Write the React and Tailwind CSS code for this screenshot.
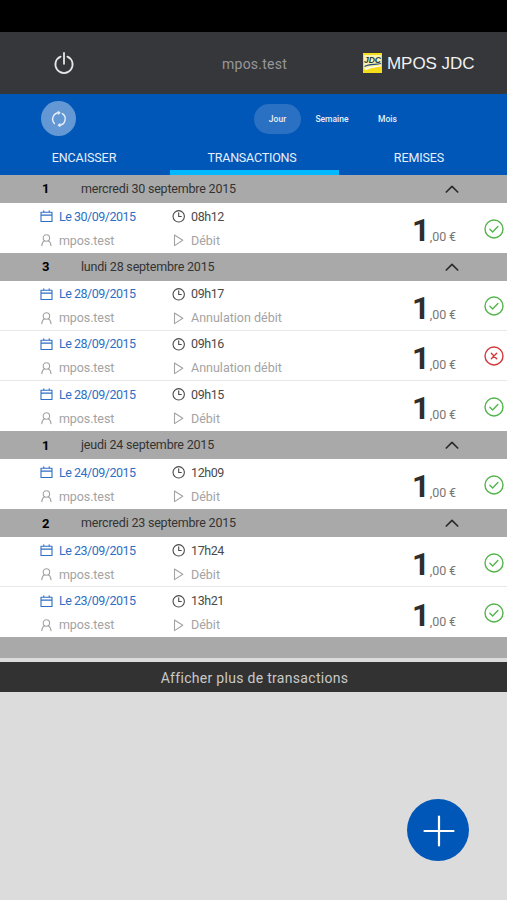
import { Fragment } from "react";

const groups = [
    {
        count: 1,
        label: "mercredi 30 septembre 2015",
        rows: [{ date: "Le 30/09/2015", time: "08h12", type: "Débit", ok: true }],
    },
    {
        count: 3,
        label: "lundi 28 septembre 2015",
        rows: [
            { date: "Le 28/09/2015", time: "09h17", type: "Annulation débit", ok: true },
            { date: "Le 28/09/2015", time: "09h16", type: "Annulation débit", ok: false },
            { date: "Le 28/09/2015", time: "09h15", type: "Débit", ok: true },
        ],
    },
    {
        count: 1,
        label: "jeudi 24 septembre 2015",
        rows: [{ date: "Le 24/09/2015", time: "12h09", type: "Débit", ok: true }],
    },
    {
        count: 2,
        label: "mercredi 23 septembre 2015",
        rows: [
            { date: "Le 23/09/2015", time: "17h24", type: "Débit", ok: true },
            { date: "Le 23/09/2015", time: "13h21", type: "Débit", ok: true },
        ],
    },
];

function Icon({ size = 13, width = 1, className = "", children }) {
    return (
        <svg
            width={size}
            height={size}
            viewBox={`0 0 ${size} ${size}`}
            fill="none"
            stroke="currentColor"
            strokeWidth={width}
            strokeLinecap="round"
            strokeLinejoin="round"
            className={"shrink-0 " + className}
        >
            {children}
        </svg>
    );
}

function Logo() {
    return (
        <svg width="19" height="20" viewBox="0 0 19 20" className="shrink-0">
            <rect width="19" height="20" fill="#f4dd1c" />
            <path d="M1 2h17v10C12 12 7 13 1 16z" fill="#f8f3b0" />
            <path d="M1.5 13.5C6 10.8 12 11.8 18 10.5" stroke="#28477a" strokeWidth="1.2" fill="none" />
            <path d="M2 16.5C8 13.4 13 14 18 12.6" stroke="#fff" strokeWidth="1.5" fill="none" />
            <text x="1" y="10" fontSize="9" fontWeight="700" fontStyle="italic" fontFamily="Liberation Sans, sans-serif" fill="#263a50" textLength="17" lengthAdjust="spacingAndGlyphs">
                JDC
            </text>
        </svg>
    );
}

function Status({ ok }) {
    return (
        <Icon size={20} width={1.4} className={ok ? "text-[#54b54c]" : "text-[#d23a3a]"}>
            <circle cx="10" cy="10" r="9" />
            {ok ? <path d="M5.9 10.2l2.7 2.7 5.3-5.4" /> : <path d="M7.3 7.3l5.4 5.4M12.7 7.3l-5.4 5.4" />}
        </Icon>
    );
}

function GroupHeader({ count, label }) {
    return (
        <div className="flex h-7 items-center bg-[#a9a9a9] pl-[42px] pr-[48px] text-[12.5px] text-[#333]">
            <span className="w-[39px] pt-px text-[13px] font-bold text-black">{count}</span>
            <span className="flex-1 whitespace-nowrap pt-px tracking-[-0.2px]">{label}</span>
            <Icon size={14} width={1.7} className="text-[#2b2b2b]">
                <path d="M1.3 10L7 4.3 12.7 10" />
            </Icon>
        </div>
    );
}

function Row({ date, time, type, ok, last }) {
    return (
        <div className={"flex h-[50.1px] items-center bg-white pl-[40px] pr-[3px] pt-[2px] text-[12.5px] leading-4 " + (last ? "" : "border-b border-[#e8e8e8]")}>
            <div className="flex w-[132px] flex-col gap-2">
                <p className="flex items-center gap-[6px] whitespace-nowrap tracking-[-0.5px] text-[#2d6fc4]">
                    <Icon width={1.1}>
                        <path d="M1 2.2h11v9.3H1zM1 5.1h11M3.8 0.7v1.5M9.2 0.7v1.5" />
                    </Icon>
                    <span>{date}</span>
                </p>
                <p className="flex items-center gap-[6px] whitespace-nowrap tracking-[-0.1px] text-[#a3a3a3]">
                    <Icon width={1.1}>
                        <circle cx="6.4" cy="4" r="3.2" />
                        <path d="M4.6 6.8C2.8 7.6 2 9 1.8 11.6M8.2 6.8c1.8.8 2.6 2.2 2.8 4.8" />
                    </Icon>
                    <span>mpos.test</span>
                </p>
            </div>
            <div className="flex flex-1 flex-col gap-2">
                <p className="flex items-center gap-[6px] whitespace-nowrap tracking-[-0.4px] text-[#4a4a4a]">
                    <Icon width={1.1}>
                        <circle cx="6.7" cy="6.3" r="5.7" />
                        <path d="M6.7 2.8v3.7h2.6" />
                    </Icon>
                    <span>{time}</span>
                </p>
                <p className="flex items-center gap-[6px] whitespace-nowrap text-[#a3a3a3]">
                    <Icon width={1.1}>
                        <path d="M2.5 1v10.6l8.3-5.3z" />
                    </Icon>
                    <span>{type}</span>
                </p>
            </div>
            <p className="flex items-baseline whitespace-nowrap pt-[5px] text-[#2f2d2e]">
                <span className="text-[31px] font-bold leading-8">1</span>
                <span className="text-[12.5px] tracking-[-0.1px] text-[#777]">,00 €</span>
            </p>
            <div className="ml-[28px]">
                <Status ok={ok} />
            </div>
        </div>
    );
}

function App() {
    return (
        <div className="relative flex h-[900px] w-[507px] flex-col overflow-hidden bg-[#dcdcdc] font-['Roboto',sans-serif]">
            <div className="h-8 shrink-0 bg-black" />
            <header className="flex h-[62px] shrink-0 items-center bg-[#36373a] pl-[52px]">
                <Icon size={24} width={1.8} className="text-[#e6e6e6]">
                    <path d="M8.6 5.6a8.6 8.6 0 1 0 6.8 0M12 2v10.8" />
                </Icon>
                <span className="ml-[146px] w-[141px] whitespace-nowrap pt-[2px] text-[14px] tracking-[0.25px] text-[#97989a]">mpos.test</span>
                <Logo />
                <span className="ml-[5px] whitespace-nowrap pt-[2px] font-['Liberation_Sans',sans-serif] text-[17px] tracking-[-0.05px] text-[#f1f1f1]">MPOS JDC</span>
            </header>

            <nav className="flex h-[80.5px] shrink-0 flex-col bg-[#0057b8] text-[#e7effa]">
                <div className="flex h-[49px] items-center pl-[41px]">
                    <button className="flex h-[35px] w-[35px] items-center justify-center rounded-full bg-[#6398d4]">
                        <Icon size={18} width={1.4}>
                            <path d="M8.8 2.8A6.3 6.3 0 0 0 4.4 13.4M12.4 3.7A6.3 6.3 0 0 1 9.4 15.2" />
                            <path d="M8.4 1.2l2 1.6-2 1.6zM9.8 13.6l-2 1.6 2 1.6z" fill="currentColor" strokeWidth="0.6" />
                        </Icon>
                    </button>
                    <div className="ml-[178px] flex items-center text-[8.5px] font-medium">
                        <button className="h-[30px] w-[47px] rounded-full bg-[#2a71c3] pt-px">Jour</button>
                        <button className="w-[62px] pt-px">Semaine</button>
                        <button className="w-[49px] pt-px">Mois</button>
                    </div>
                </div>
                <div className="flex flex-1 text-center text-[12.5px] tracking-[-0.1px]">
                    <span className="w-[170px] pr-[2px] pt-[6px]">ENCAISSER</span>
                    <span className="w-[169px] border-b-[5px] border-[#00b8ff] pr-[5px] pt-[6px] tracking-[-0.2px]">TRANSACTIONS</span>
                    <span className="w-[160px] pt-[6px]">REMISES</span>
                </div>
            </nav>

            <main className="shrink-0">
                {groups.map((group) => (
                    <Fragment key={group.label}>
                        <GroupHeader count={group.count} label={group.label} />
                        {group.rows.map((row, i) => (
                            <Row key={row.time} {...row} last={i === group.rows.length - 1} />
                        ))}
                    </Fragment>
                ))}
                <div className="h-[21px] bg-[#a9a9a9]" />
            </main>

            <button className="mt-1 h-[30px] shrink-0 bg-[#323232] pl-[2px] pt-[2px] text-[14px] tracking-[0.3px] text-[#c9c9c9]">
                Afficher plus de transactions
            </button>

            <button className="absolute bottom-[39px] right-[38px] flex h-[62px] w-[62px] items-center justify-center rounded-full bg-[#0057b8] text-white">
                <Icon size={32} width={2.2} className="translate-x-px translate-y-px">
                    <path d="M16 1.5v29M1.5 16h29" />
                </Icon>
            </button>
        </div>
    );
}

export default App;
